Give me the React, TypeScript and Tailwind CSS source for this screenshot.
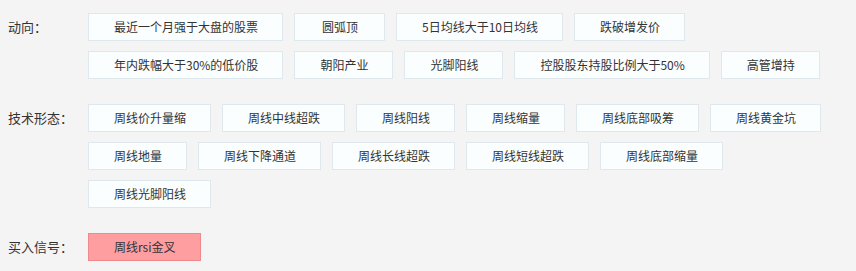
import React from "react";

const sections: { label: string; items: string[]; active?: string }[] = [
  {
    label: "动向：",
    items: [
      "最近一个月强于大盘的股票",
      "圆弧顶",
      "5日均线大于10日均线",
      "跌破增发价",
      "年内跌幅大于30%的低价股",
      "朝阳产业",
      "光脚阳线",
      "控股股东持股比例大于50%",
      "高管增持",
    ],
  },
  {
    label: "技术形态：",
    items: [
      "周线价升量缩",
      "周线中线超跌",
      "周线阳线",
      "周线缩量",
      "周线底部吸筹",
      "周线黄金坑",
      "周线地量",
      "周线下降通道",
      "周线长线超跌",
      "周线短线超跌",
      "周线底部缩量",
      "周线光脚阳线",
    ],
  },
  {
    label: "买入信号：",
    items: ["周线rsi金叉"],
    active: "周线rsi金叉",
  },
];

export default function App() {
  return (
    <div
      className="w-[856px] h-[271px] bg-[#f4f4f4] text-[#333] pt-[13px] flex flex-col gap-[25px] overflow-hidden"
      style={{ fontFamily: '"Noto Sans CJK SC", "Noto Sans", sans-serif' }}
    >
      {sections.map((s) => (
        <div key={s.label} className="flex items-start">
          <div className="w-[88px] shrink-0 pl-[8px] h-[28px] flex items-center text-[13px]">
            {s.label}
          </div>
          <div className="flex flex-wrap gap-x-[11px] gap-y-[10px] w-[750px]">
            {s.items.map((it) => {
              const active = it === s.active;
              return (
                <div
                  key={it}
                  className={
                    active
                      ? "h-[28px] min-w-[91px] pl-[25px] pr-[24px] flex items-center justify-center text-[12px] whitespace-nowrap border border-[#ee8a8e] bg-[#ff9ea1] text-[#333]"
                      : "h-[28px] min-w-[91px] pl-[25px] pr-[24px] flex items-center justify-center text-[12px] whitespace-nowrap border border-[#dfe9ed] bg-[#fbfeff] text-[#333]"
                  }
                >
                  {it}
                </div>
              );
            })}
          </div>
        </div>
      ))}
    </div>
  );
}
